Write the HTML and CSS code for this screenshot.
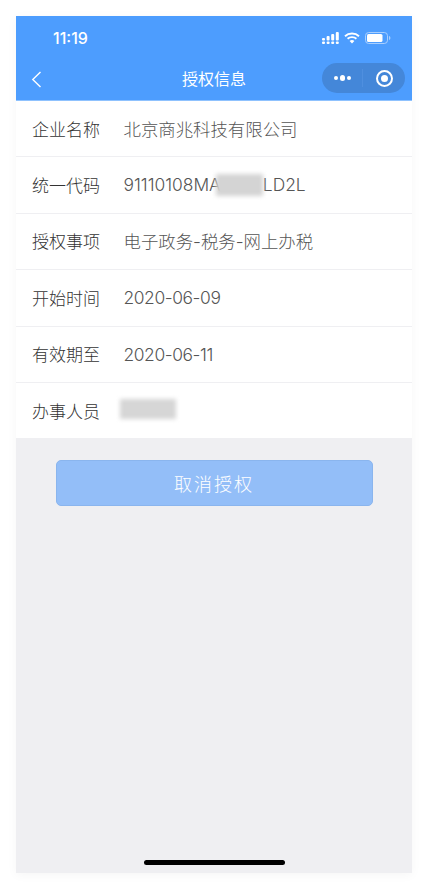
FILE: index.html
```html
<!DOCTYPE html>
<html lang="en">
<head>
    <meta charset="UTF-8">
    <meta name="viewport" content="width=device-width, initial-scale=1.0">
    <title>授权信息</title>
    <link rel="stylesheet" href="styles.css">
</head>
<body>
    <div class="phone">
        <div class="header">
            <div class="status-bar">
                <span class="time">11:19</span>
                <div class="status-icons">
                    <svg class="signal" width="17" height="12" viewBox="0 0 17 12">
                        <rect x="0" y="6" width="3" height="2.4" rx="1" fill="#fff"/>
                        <rect x="0" y="9.4" width="3" height="2.6" rx="1" fill="#fff"/>
                        <rect x="4.6" y="4" width="3" height="4.4" rx="1" fill="#fff"/>
                        <rect x="4.6" y="9.4" width="3" height="2.6" rx="1" fill="#fff"/>
                        <rect x="9.2" y="2" width="3" height="6.4" rx="1" fill="#fff"/>
                        <rect x="9.2" y="9.4" width="3" height="2.6" rx="1" fill="#fff"/>
                        <rect x="13.8" y="0" width="3" height="8.4" rx="1" fill="#fff"/>
                        <rect x="13.8" y="9.4" width="3" height="2.6" rx="1" fill="#fff"/>
                    </svg>
                    <svg class="wifi" width="16" height="12" viewBox="0 0 16 12">
                        <path d="M1 4.2C4.8 .6 11.2 .6 15 4.2" fill="none" stroke="#fff" stroke-width="1.9"/>
                        <path d="M3.6 6.8C6 4.6 10 4.6 12.4 6.8" fill="none" stroke="#fff" stroke-width="1.9"/>
                        <path d="M5.6 9 8 11.6 10.4 9C9 7.8 7 7.8 5.6 9Z" fill="#fff"/>
                    </svg>
                    <svg class="battery" width="26" height="12" viewBox="0 0 26 12">
                        <rect x="0.5" y="0.5" width="22" height="11" rx="3.2" fill="none" stroke="#a9cffe"/>
                        <rect x="2" y="2" width="15.5" height="8" rx="1.6" fill="#fff"/>
                        <path d="M24 4v4c.9-.3 1.4-1.1 1.4-2S24.900 4.300 24 4Z" fill="#a9cffe"/>
                    </svg>
                </div>
            </div>
            <div class="nav-bar">
                <svg class="back" width="11" height="17" viewBox="0 0 11 17">
                    <path d="M9.500 1 1.800 8.500l7.700 7.500" fill="none" stroke="#fff" stroke-width="1.400"/>
                </svg>
                <span class="nav-title">授权信息</span>
                <div class="capsule">
                    <div class="capsule-left">
                        <span class="dot"></span><span class="dot big"></span><span class="dot"></span>
                    </div>
                    <div class="capsule-right">
                        <span class="target"></span>
                    </div>
                </div>
            </div>
        </div>

        <div class="info-list">
            <div class="info-row">
                <span class="label">企业名称</span>
                <span class="value">北京商兆科技有限公司</span>
            </div>
            <div class="info-row">
                <span class="label">统一代码</span>
                <span class="value code">91110108MA<span class="blur-code"></span>LD2L</span>
            </div>
            <div class="info-row">
                <span class="label">授权事项</span>
                <span class="value">电子政务-税务-网上办税</span>
            </div>
            <div class="info-row">
                <span class="label">开始时间</span>
                <span class="value date">2020-06-09</span>
            </div>
            <div class="info-row">
                <span class="label">有效期至</span>
                <span class="value date">2020-06-11</span>
            </div>
            <div class="info-row">
                <span class="label">办事人员</span>
                <span class="blur-name"></span>
            </div>
        </div>

        <button class="cancel-button">取消授权</button>

        <div class="home-bar"></div>
    </div>
</body>
</html>
```

FILE: styles.css
```css
body {
    margin: 0;
    padding: 16px;
    background-color: #fff;
    font-family: "Liberation Sans", "Noto Sans CJK SC", sans-serif;
}

.phone {
    width: 396px;
    height: 857px;
    display: flex;
    flex-direction: column;
    background-color: #efeff2;
    box-shadow: 0 2px 10px rgba(0, 0, 0, 0.04);
}

.header {
    height: 84px;
    background-color: #4d9dfe;
    border-bottom: 1px solid #8fc2fe;
    color: #fff;
}

.status-bar {
    height: 44px;
    display: flex;
    justify-content: space-between;
    align-items: center;
    padding: 0 21px 0 37px;
}

.time {
    font-family: Inter, sans-serif;
    font-size: 16px;
    font-weight: 500;
}

.status-icons {
    display: flex;
    align-items: center;
    gap: 5px;
}

.nav-bar {
    height: 40px;
    display: flex;
    justify-content: space-between;
    align-items: center;
    padding: 0 7px 0 15px;
    position: relative;
}

.nav-title {
    position: absolute;
    left: 0;
    right: 0;
    top: 6px;
    text-align: center;
    font-size: 16px;
}

.back {
    margin-top: -2px;
}

.capsule {
    width: 83px;
    height: 30px;
    margin-top: -4px;
    display: flex;
    background-color: #4487d9;
    border-radius: 15px;
}

.capsule-left {
    width: 41px;
    display: flex;
    justify-content: center;
    align-items: center;
    gap: 1.500px;
    position: relative;
}

.capsule-left::after {
    content: "";
    position: absolute;
    right: 0;
    top: 6px;
    bottom: 6px;
    width: 1px;
    background-color: #4f8fdf;
}

.capsule-right {
    flex: 1;
    display: flex;
    justify-content: center;
    align-items: center;
}

.dot {
    width: 4px;
    height: 4px;
    border-radius: 50%;
    background-color: #fff;
}

.dot.big {
    width: 5.500px;
    height: 5.500px;
}

.target {
    width: 7px;
    height: 7px;
    border: 3px solid #4487d9;
    outline: 2px solid #fff;
    border-radius: 50%;
    background-color: #fff;
    box-sizing: content-box;
}

.info-list {
    background-color: #fff;
}

.info-row {
    height: 55.400px;
    display: flex;
    align-items: center;
    padding-left: 16px;
    border-bottom: 1px solid #efeff2;
    font-size: 17px;
}

.info-row:last-child {
    border-bottom: none;
}

.label {
    width: 91.500px;
    margin-top: -1px;
    font-weight: 300;
    color: #333;
}

.value {
    margin-top: -1px;
    font-family: Inter, "Noto Sans CJK SC", sans-serif;
    font-size: 17.400px;
    font-weight: 300;
    color: #555;
}

.date {
    margin-top: 0;
    letter-spacing: -0.400px;
}

.code {
    display: flex;
    align-items: center;
}

.blur-code {
    width: 47px;
    height: 22px;
    margin-left: -5px;
    background-color: #d4d4d4;
    filter: blur(2px);
}

.blur-name {
    width: 56px;
    height: 20px;
    margin-left: -3.500px;
    margin-top: -4px;
    background-color: #d6d6d6;
    filter: blur(2px);
}

.cancel-button {
    width: 317px;
    height: 46px;
    margin: 22px auto 0;
    display: block;
    background-color: #93bef8;
    color: #fff;
    border: 1px solid #8ab5ee;
    border-radius: 5px;
    font-family: inherit;
    font-size: 18px;
    font-weight: 300;
    letter-spacing: 2px;
}

.home-bar {
    width: 141px;
    height: 5px;
    margin: auto auto 8px;
    background-color: #000;
    border-radius: 3px;
}
```
